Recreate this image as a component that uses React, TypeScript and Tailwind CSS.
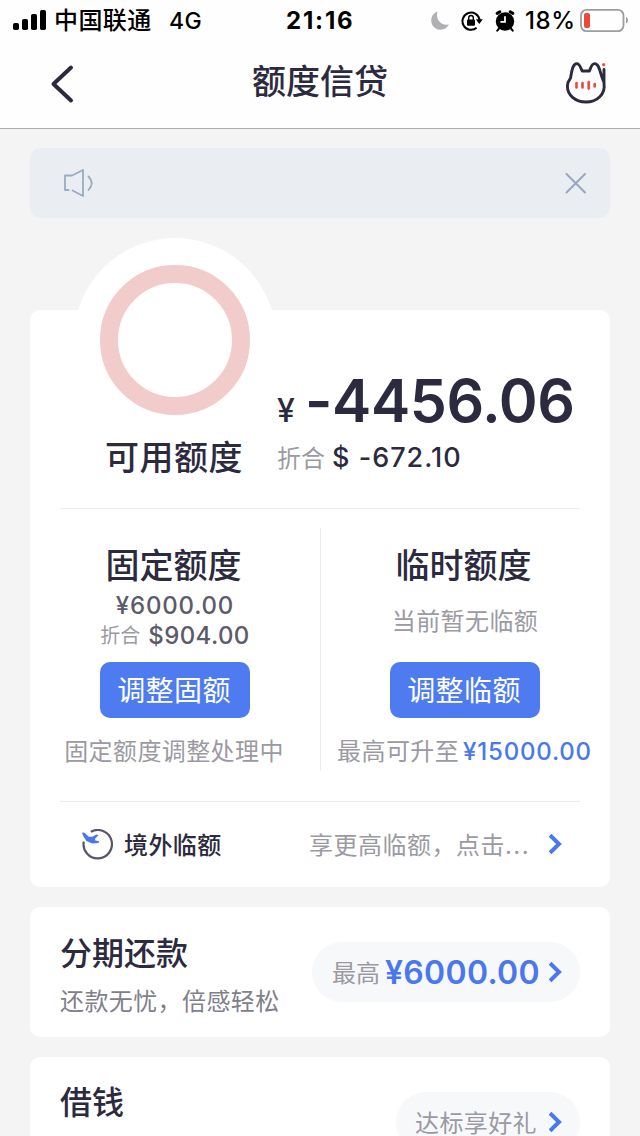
import React from 'react';

const StatusBar = () => (
  <div className="flex h-10 items-center pt-px text-black">
    <svg className="ml-[13px] h-[22px] w-[34px] shrink-0" viewBox="0 0 34 22">
      <rect x="0" y="13" width="6" height="7" rx="1.8" />
      <rect x="9" y="9" width="6" height="11" rx="1.8" />
      <rect x="18" y="4" width="6" height="16" rx="1.8" />
      <rect x="27" y="0" width="6" height="20" rx="1.8" />
    </svg>
    <span className="mt-px ml-[7px] w-[115px] text-[24px] font-medium tracking-[0.4px]">中国联通</span>
    <span className="mt-px w-[117px] text-[23px] font-medium tracking-[0.3px]">4G</span>
    <span className="mt-px w-[144px] text-[24px] font-bold tracking-[1.8px]">21:16</span>
    <svg className="h-5 w-5 shrink-0" viewBox="0 0 20 20" fill="#b0afb3">
      <path d="M7.5 0.6A9.3 9.3 0 1 0 19 13.2C12.2 15.6 5 9 7.5 0.6Z" />
    </svg>
    <svg className="ml-[11px] h-[22px] w-[22px] shrink-0" viewBox="0 0 22 22">
      <path d="M15.6 17.8A8.6 8.6 0 1 1 18.6 10" fill="none" stroke="#000" strokeWidth="2" />
      <path d="M14.8 9.3h7l-3.5 4.6z" />
      <rect x="6" y="9.4" width="8" height="6.4" rx="1" />
      <path d="M7.7 10V7.8a2.3 2.3 0 0 1 4.6 0V10" fill="none" stroke="#000" strokeWidth="1.4" />
    </svg>
    <svg className="ml-3 h-[22px] w-5 shrink-0" viewBox="0 0 20 22">
      <circle cx="10" cy="11.5" r="9.2" />
      <path d="M2.2 3.4 4.8 1.8M17.8 3.4 15.2 1.8" stroke="#000" strokeWidth="3" strokeLinecap="round" />
      <path d="M4.4 18 2.3 20.6M15.6 18l2.1 2.6" stroke="#000" strokeWidth="2" strokeLinecap="round" />
      <path d="M10 6.3v5.6H5.4" fill="none" stroke="#fff" strokeWidth="1.8" />
    </svg>
    <span className="mt-px ml-[10px] w-[55px] text-[24px] font-medium tracking-[0.6px] whitespace-nowrap">18%</span>
    <svg className="h-6 w-[50px] shrink-0" viewBox="0 0 50 24">
      <rect x="1" y="0.9" width="42.5" height="21.2" rx="5.5" fill="none" stroke="#9d9ca0" strokeWidth="1.8" />
      <rect x="4" y="4" width="6" height="15" rx="2" fill="#ea4a38" />
      <path d="M46 8q2 1 2 3.3t-2 3.3z" fill="#9d9ca0" />
    </svg>
  </div>
);

const CatIcon = () => (
  <svg className="h-12 w-12" viewBox="0 0 48 48" fill="none" strokeLinecap="round" strokeLinejoin="round">
    <path
      d="M42 11.5V25.5C43.8 36 35 44 24 44 13 44 5.4 37 5.4 28 5.4 24.5 7 22 8.6 19.8 9.5 15 10.3 5.6 14.8 5.6c3.2 0 3.7 4.4 5.4 7.4h7.2c1.4-3 2-7.4 5.2-7.4 4.7 0 5.4 9 8 15.4l1.4 3.5"
      stroke="#2c2a3e"
      strokeWidth="2.9"
    />
    <path d="M14.5 25v4.5M20.5 25v4.5M26.7 24.2v6.4M32.7 26v2.5" stroke="#e6513f" strokeWidth="2.7" />
    <circle cx="41.7" cy="6.7" r="1.6" fill="#e6513f" />
  </svg>
);

const NavBar = () => (
  <div className="flex h-[89px] items-start justify-between border-b border-[#ababad] pr-[30px] pl-[50px]">
    <svg className="mt-6 h-10 w-6" viewBox="0 0 24 40" fill="none">
      <path d="M21 3.5 3.5 20 21 36.5" stroke="#2c2a3e" strokeWidth="4" strokeLinecap="round" strokeLinejoin="round" />
    </svg>
    <h1 className="mt-[18px] ml-1 text-[34px] leading-[48px] font-medium">额度信贷</h1>
    <div className="mt-[18px]">
      <CatIcon />
    </div>
  </div>
);

const Notice = () => (
  <div className="mx-[30px] mt-[19px] flex h-[70px] items-center justify-between rounded-[10px] bg-[#eaeef3] pr-[22px] pl-8">
    <svg className="h-8 w-8" viewBox="0 0 32 32" fill="none" stroke="#9aabc1" strokeWidth="1.8" strokeLinejoin="round" strokeLinecap="round">
      <path d="M6.5 23H3V8.5h7L21 3v26L10.5 23.5" />
      <path d="M26.5 9.5q6.5 6.500 0 13.500" />
    </svg>
    <svg className="h-6 w-6" viewBox="0 0 24 24" stroke="#97a7bd" strokeWidth="2" strokeLinecap="round">
      <path d="m2.500 3 18.500 18.500M21 3 2.500 21.500" />
    </svg>
  </div>
);

const Chevron = () => (
  <svg className="-mt-px h-[22px] w-[14px] shrink-0" viewBox="0 0 14 22" fill="none">
    <path d="m1 2.200 9 8.800-9 8.800" stroke="#4a77ee" strokeWidth="4" />
  </svg>
);

const ActionButton = ({ label }: { label: string }) => (
  <button className="mt-3 flex h-14 w-[150px] shrink-0 items-center justify-center rounded-[10px] bg-[#4e7bef] pt-[2px] pr-[2px] text-[28px] tracking-[0.4px] whitespace-nowrap text-white">
    {label}
  </button>
);

const QuotaCard = () => (
  <section className="relative mx-[30px] mt-[92px] h-[577px] rounded-[10px] bg-white">
    {/* Gauge that sticks out of the card's top edge */}
    <div className="absolute -top-[72px] left-[44px] flex h-[204px] w-[202px] items-center justify-center rounded-full bg-white">
      <div className="h-[150px] w-[150px] rounded-full border-[18px] border-[#f2ccca]" />
    </div>

    <div className="mx-[30px] flex h-[199px] border-b border-[#ececee]">
      <div className="w-[217px] pt-[123px] pl-[45px] text-[34px] leading-[50px] font-medium whitespace-nowrap">
        <span className="tracking-[0.5px]">可用额度</span>
      </div>
      <div className="pt-[56px] whitespace-nowrap">
        <div className="flex h-[72px] items-baseline leading-[72px]">
          <span className="w-[28px] text-[32px] leading-none font-medium">¥</span>
          <span className="text-[59px] leading-[70px] font-semibold tracking-[-0.4px]">-4456.06</span>
        </div>
        <div className="flex h-[40px] items-center text-[24px] leading-[40px]">
          <span className="mt-px w-[55px] text-[#9b9aa3]">折合</span>
          <span className="text-[27px] font-medium tracking-[1px]">$ -672.10</span>
        </div>
      </div>
    </div>

    <div className="mt-[19px] grid h-[243px] grid-cols-2 whitespace-nowrap">
      <div className="flex flex-col items-center pt-[14px]">
        <h2 className="-ml-[3px] text-[34px] leading-[48px] font-medium">固定额度</h2>
        <div className="mt-px text-[24px] leading-[30px] font-medium tracking-[0.8px] text-[#5c5b69]">¥6000.00</div>
        <div className="flex h-[30px] items-center text-[24px] leading-[30px] font-medium tracking-[0.4px] text-[#5c5b69]">
          <span className="mr-2 text-[20px] font-normal tracking-normal text-[#9b9aa3]">折合</span>
          $904.00
        </div>
        <div className="-mt-px">
          <ActionButton label="调整固额" />
        </div>
        <p className="mt-4 -ml-[2px] text-[24px] leading-9 tracking-[0.4px] text-[#9b9aa3]">固定额度调整处理中</p>
      </div>
      <div className="flex flex-col items-center border-l border-[#ececee] pt-[14px]">
        <h2 className="-ml-[4px] text-[34px] leading-[48px] font-medium">临时额度</h2>
        <p className="mt-0.5 -ml-px text-[24px] leading-[60px] tracking-[0.4px] text-[#9b9aa3]">当前暂无临额</p>
        <div className="-mt-[2px] -ml-px">
          <ActionButton label="调整临额" />
        </div>
        <p className="mt-4 -ml-[2px] text-[24px] leading-9 text-[#9b9aa3]">
          <span className="tracking-[0.4px]">最高可升至</span>
          <span className="ml-1 font-medium tracking-[0.8px] text-[#4a77ee]">¥15000.00</span>
        </p>
      </div>
    </div>

    <div className="mx-[30px] mt-[30px] flex h-[86px] items-center border-t border-[#ececee] pl-[21px] text-[24px] whitespace-nowrap">
      <svg className="h-8 w-8 shrink-0" viewBox="0 0 32 32" fill="none">
        <path d="M9.8 2.800A14.200 14.200 0 1 1 2.800 12.500" stroke="#57566a" strokeWidth="2.200" />
        <path d="M1 3.800 3.200 3.400l4.600 4.400h3.400l4.300-2.200 2 .7-3.500 3.500.3 1.800 4 .6-.8 1.800-6.300.6-5.800-2.600L2.200 7z" fill="#4a77ee" />
      </svg>
      <span className="mt-0.5 ml-[11px] font-medium tracking-[0.4px]">境外临额</span>
      <span className="mt-0.5 ml-auto tracking-[0.5px] text-[#9b9aa3]">
        享更高临额，点击<span className="tracking-[1.4px]">...</span>
      </span>
      <span className="mr-[17px] ml-[19px]">
        <Chevron />
      </span>
    </div>
  </section>
);

const App = () => (
  <div className="h-[1136px] w-[640px] overflow-hidden bg-[#f4f4f4] font-['Inter','Noto_Sans_CJK_SC',sans-serif] text-[#2c2a3e]">
    <header className="bg-[#fefefe]">
      <StatusBar />
      <NavBar />
    </header>

    <Notice />
    <QuotaCard />

    <section className="mx-[30px] mt-5 flex h-[130px] items-center justify-between rounded-[10px] bg-white px-[30px] whitespace-nowrap">
      <div className="pt-[11px]">
        <h2 className="text-[32px] leading-[48px] font-medium">分期还款</h2>
        <p className="text-[24px] leading-[48px] tracking-[0.4px] text-[#807f8b]">还款无忧，倍感轻松</p>
      </div>
      <div className="flex h-[60px] w-[268px] items-center rounded-full bg-[#f7f8fa] pl-5">
        <span className="mt-[3px] text-[24px] text-[#9b9aa3]">最高</span>
        <span className="mt-px ml-[5px] flex-1 text-[32px] font-semibold tracking-[0.3px] text-[#4a77ee]">¥6000.00</span>
        <span className="mr-[17px]">
          <Chevron />
        </span>
      </div>
    </section>

    <section className="mx-[30px] mt-5 flex h-[130px] items-center justify-between rounded-t-[10px] bg-white px-[30px] whitespace-nowrap">
      <h2 className="mb-[39px] text-[32px] leading-[48px] font-medium">借钱</h2>
      <div className="flex h-[60px] w-[184px] items-center rounded-full bg-[#f7f8fa] pl-[19px]">
        <span className="mt-[3px] flex-1 text-[24px] tracking-[0.4px] text-[#9b9aa3]">达标享好礼</span>
        <span className="mr-[17px]">
          <Chevron />
        </span>
      </div>
    </section>
  </div>
);

export default App;
